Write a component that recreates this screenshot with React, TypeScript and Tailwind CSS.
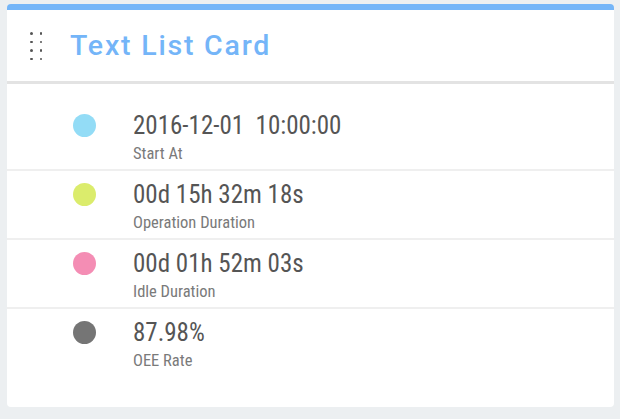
import React from "react";

const rows = [
  { color: "bg-[#93dcf6]", value: "2016-12-01\u00a0\u00a010:00:00", label: "Start At" },
  { color: "bg-[#dbec6c]", value: "00d 15h 32m 18s", label: "Operation Duration" },
  { color: "bg-[#f48db4]", value: "00d 01h 52m 03s", label: "Idle Duration" },
  { color: "bg-[#757575]", value: "87.98%", label: "OEE Rate" },
];

export default function App() {
  return (
    <div className="w-[620px] h-[419px] bg-[#eceff1] pt-[4px] pl-[7px] pr-[6px] pb-[12px] font-['Roboto',sans-serif]">
      <div className="h-full bg-white rounded-[4px] border-t-[6px] border-[#74b5f8] flex flex-col">
        <div className="h-[74px] border-b-[3px] border-[#e3e3e3] flex items-center pl-[23px] shrink-0">
          <div className="grid grid-cols-2 gap-x-[7px] gap-y-[6px] mr-[28px] mt-[1px]">
            {Array.from({ length: 8 }).map((_, i) => (
              <span key={i} className="block w-[2.5px] h-[2.5px] rounded-full bg-[#555]" />
            ))}
          </div>
          <h1 className="text-[28.5px] font-medium tracking-[1.8px] text-[#74b5f8] leading-none mt-[1px]">Text List Card</h1>
        </div>
        <div className="pt-[18px]">
          {rows.map((r, i) => (
            <div
              key={i}
              className={`flex items-start pl-[66px] pt-[9px] pb-[4px] ${i < 3 ? "border-b-2 border-[#efefef]" : ""}`}
            >
              <span className={`block w-[23px] h-[23px] rounded-full mt-[3px] shrink-0 ${r.color}`} />
              <div className="ml-[37px] font-['Roboto_Condensed','Roboto',sans-serif]">
                <div className="text-[25px] leading-[30px] text-[#555]">{r.value}</div>
                <div className="text-[16.5px] leading-[22px] mt-[2px] text-[#7a7a7a]">{r.label}</div>
              </div>
            </div>
          ))}
        </div>
      </div>
    </div>
  );
}
